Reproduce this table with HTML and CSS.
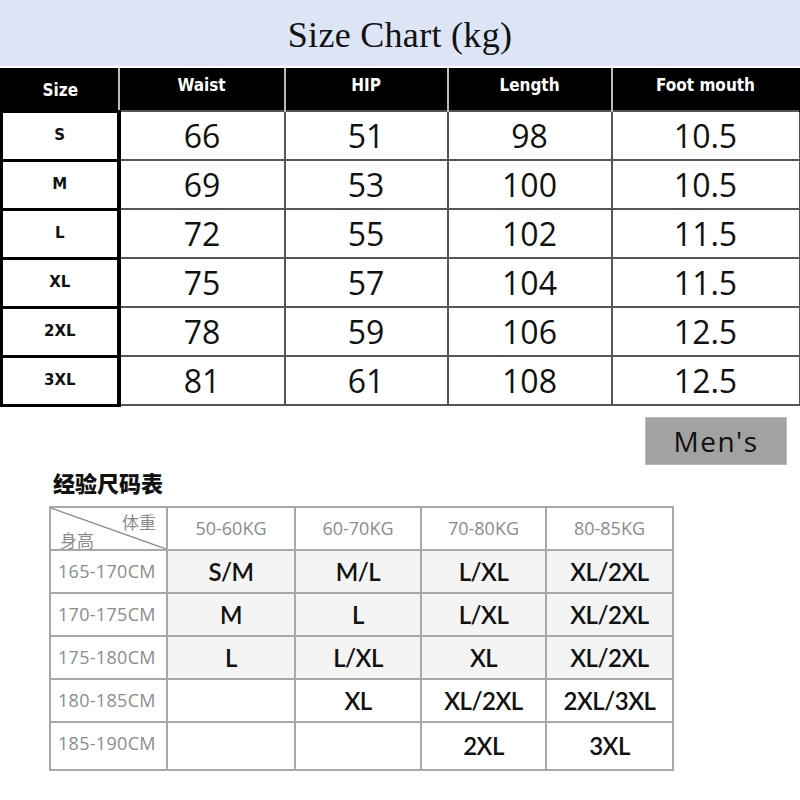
FILE: index.html
```html
<!DOCTYPE html>
<html>
<head>
<meta charset="utf-8">
<link rel="stylesheet" href="styles.css">
</head>
<body>
<header class="band"><h1 class="title">Size Chart (kg)</h1></header>
<table class="chart">
  <colgroup><col class="c1"><col class="c2"><col class="c3"><col class="c4"><col class="c5"></colgroup>
  <thead>
    <tr><th class="size-h">Size</th><th>Waist</th><th>HIP</th><th>Length</th><th>Foot mouth</th></tr>
  </thead>
  <tbody>
    <tr><td class="sz">S</td><td>66</td><td>51</td><td>98</td><td>10.5</td></tr>
    <tr><td class="sz">M</td><td>69</td><td>53</td><td>100</td><td>10.5</td></tr>
    <tr><td class="sz">L</td><td>72</td><td>55</td><td>102</td><td>11.5</td></tr>
    <tr><td class="sz">XL</td><td>75</td><td>57</td><td>104</td><td>11.5</td></tr>
    <tr><td class="sz">2XL</td><td>78</td><td>59</td><td>106</td><td>12.5</td></tr>
    <tr><td class="sz">3XL</td><td>81</td><td>61</td><td>108</td><td>12.5</td></tr>
  </tbody>
</table>
<section class="lower">
  <div class="mens-row"><div class="mens">Men's</div></div>
  <h2 class="cn-title">经验尺码表</h2>
  <table class="exp">
    <colgroup><col class="e1"><col class="e2"><col class="e3"><col class="e4"><col class="e5"></colgroup>
    <thead>
      <tr>
        <th class="corner">
          <svg class="diag" viewBox="0 0 117 45" preserveAspectRatio="none"><line x1="0" y1="0" x2="117" y2="45" stroke="#8a8a8a" stroke-width="1.3"/></svg>
          <span class="wt">体重</span><span class="ht">身高</span>
        </th>
        <th>50-60KG</th><th>60-70KG</th><th>70-80KG</th><th>80-85KG</th>
      </tr>
    </thead>
    <tbody>
      <tr class="shade"><td class="h">165-170CM</td><td>S/M</td><td>M/L</td><td>L/XL</td><td>XL/2XL</td></tr>
      <tr class="shade"><td class="h">170-175CM</td><td>M</td><td>L</td><td>L/XL</td><td>XL/2XL</td></tr>
      <tr class="shade"><td class="h">175-180CM</td><td>L</td><td>L/XL</td><td>XL</td><td>XL/2XL</td></tr>
      <tr><td class="h">180-185CM</td><td></td><td>XL</td><td>XL/2XL</td><td>2XL/3XL</td></tr>
      <tr class="last"><td class="h">185-190CM</td><td></td><td></td><td>2XL</td><td>3XL</td></tr>
    </tbody>
  </table>
</section>
</body>
</html>
```

FILE: styles.css
```css
html, body { margin: 0; padding: 0; background: #fff; }
body { width: 800px; font-family: "Open Sans", "Noto Sans", sans-serif; }

.band {
  height: 66px;
  background: #dce4f6;
  display: flex;
  align-items: center;
  justify-content: center;
  border-bottom: 2px solid #fff;
}
.title {
  margin: 0;
  font-family: "Liberation Serif", serif;
  font-weight: 400;
  font-size: 36px;
  letter-spacing: 0.3px;
  color: #111;
  padding-top: 3px;
}

.chart {
  border-collapse: collapse;
  table-layout: fixed;
  width: 798px;
}
.c1 { width: 117px; } .c2 { width: 166px; } .c3 { width: 163px; } .c4 { width: 164px; } .c5 { width: 188px; }
.chart th {
  background: #000;
  color: #fff;
  height: 34px;
  padding: 0 0 8px 0;
  font-family: "DejaVu Sans Condensed", "DejaVu Sans", sans-serif;
  font-weight: 700;
  font-size: 17px;
  border-left: 2px solid #bbb;
  border-right: 2px solid #bbb;
  border-top: 0;
}
.chart th:first-child { border-left: 3px solid #000; padding-bottom: 0; padding-top: 2px; }
.chart th:last-child { border-right: 2px solid #000; }
.chart td {
  height: 46px;
  padding: 0;
  text-align: center;
  font-size: 32px;
  line-height: 1;
  color: #111;
  border: 2px solid #555;
}
.chart td.sz {
  font-family: "DejaVu Sans", sans-serif;
  font-weight: 700;
  font-size: 15px;
  border: 3px solid #000;
  border-right-width: 4px;
}
.chart td:last-child { border-right: 2px solid #555; }

.lower {
  padding: 10px 0 30px 49px;
}
.mens-row {
  display: flex;
  justify-content: flex-end;
  padding-right: 13px;
}
.mens {
  width: 142px;
  height: 48px;
  background: #a2a2a2;
  color: #111;
  font-size: 28px;
  letter-spacing: 1.5px;
  display: flex;
  align-items: center;
  justify-content: center;
  box-sizing: border-box;
  border: 1px solid #bbb;
}
.cn-title {
  margin: 2px 0 0 4px;
  font-family: "Noto Sans CJK SC", sans-serif;
  font-weight: 900;
  font-size: 22px;
  line-height: 30px;
  letter-spacing: 0;
  color: #111;
}
.exp {
  margin-top: 9px;
  border-collapse: collapse;
  table-layout: fixed;
  width: 624px;
  border: 2px solid #9a9a9a;
}
.e1 { width: 117px; } .e2 { width: 128px; } .e3 { width: 126px; } .e4 { width: 125px; } .e5 { width: 127px; }
.exp th, .exp td {
  border: 2px solid #a8a8a8;
  padding: 0;
  text-align: center;
}
.exp th {
  height: 41px;
  font-weight: 400;
  font-size: 18px;
  color: #8c8c8c;
  font-family: "Open Sans", sans-serif;
}
.exp th.corner {
  position: relative;
  border-top-left-radius: 10px;
}
.diag {
  position: absolute;
  left: 0; top: 0;
  width: 100%; height: 100%;
}
.wt, .ht {
  position: absolute;
  font-family: "Noto Sans CJK SC", sans-serif;
  font-size: 17px;
  color: #8c8c8c;
  line-height: 1;
}
.wt { right: 10px; top: 5px; }
.ht { left: 9px; bottom: 1px; }
.exp td {
  height: 41px;
  font-family: "Lato", sans-serif;
  font-weight: 600;
  font-size: 24px;
  color: #111;
  letter-spacing: -0.5px;
}
.exp td.h {
  font-family: "Open Sans", sans-serif;
  font-weight: 400;
  font-size: 18px;
  color: #8c8c8c;
  text-align: left;
  padding-left: 7px;
  letter-spacing: 0.3px;
  vertical-align: top;
  padding-top: 8px;
  height: 33px;
}
.exp tr.shade td:not(.h) { background: #f4f4f4; }
.exp tr.last td { height: 46px; }
.exp tr.last td.h { height: 38px; }
```
